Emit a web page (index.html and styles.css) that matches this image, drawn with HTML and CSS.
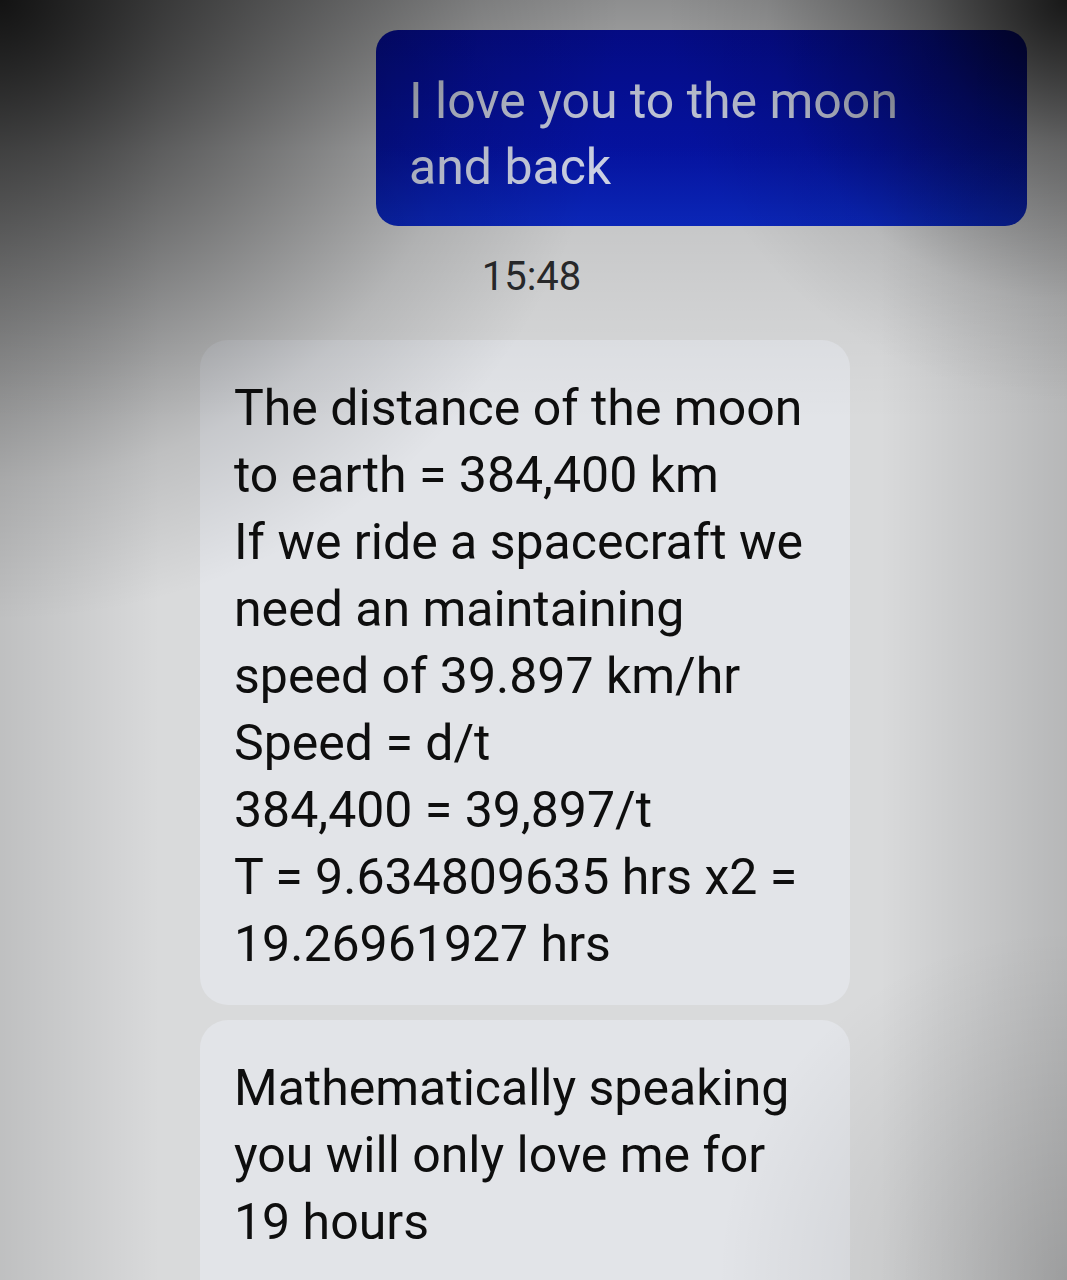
FILE: index.html
```html
<!DOCTYPE html>
<html lang="en">
<head>
<meta charset="utf-8">
<title>Messages</title>
<link rel="stylesheet" href="styles.css">
</head>
<body>
<main class="thread">
  <div class="msg sent">
    <p class="line">I love you to the moon</p>
    <p class="line">and back</p>
  </div>
  <div class="time">15:48</div>
  <div class="msg received first">
    <p class="line">The distance of the moon</p>
    <p class="line">to earth = 384,400 km</p>
    <p class="line">If we ride a spacecraft we</p>
    <p class="line">need an maintaining</p>
    <p class="line">speed of 39.897 km/hr</p>
    <p class="line">Speed = d/t</p>
    <p class="line">384,400 = 39,897/t</p>
    <p class="line">T = 9.634809635 hrs x2 =</p>
    <p class="line">19.26961927 hrs</p>
  </div>
  <div class="msg received second">
    <p class="line">Mathematically speaking</p>
    <p class="line">you will only love me for</p>
    <p class="line">19 hours</p>
  </div>
</main>
<div class="vignette"></div>
</body>
</html>
```
FILE: styles.css
```css
html, body {
  margin: 0;
  padding: 0;
}
body {
  width: 1067px;
  height: 1280px;
  overflow: hidden;
  position: relative;
  background: #d9dadb;
  font-family: Roboto, "Liberation Sans", Arial, sans-serif;
}
.thread {
  display: flex;
  flex-direction: column;
  padding-top: 30px;
}
.line {
  margin: 0;
  white-space: nowrap;
}
.msg.sent {
  align-self: flex-start;
  margin-left: 376px;
  width: 651px;
  box-sizing: border-box;
  padding: 38px 34px 26px 33px;
  border-radius: 22px;
  background: linear-gradient(180deg, #0610bc 0%, #0615b4 60%, #0c2ac8 100%);
  color: #e4eaff;
  font-size: 50px;
  line-height: 66px;
  font-weight: 400;
}
.time {
  text-align: center;
  margin-top: 28px;
  font-size: 40px;
  line-height: 46px;
  color: #2a2b2d;
  padding-right: 4px;
}
.msg.received {
  margin-left: 200px;
  width: 650px;
  box-sizing: border-box;
  padding: 35px 30px 27px 34px;
  border-radius: 28px;
  background: #e2e4e8;
  color: #0e0e0e;
  font-size: 50px;
  line-height: 67px;
}
.msg.received.first {
  margin-top: 40px;
}
.msg.received.second {
  margin-top: 15px;
  padding-top: 35px;
  padding-bottom: 60px;
}
.vignette {
  position: absolute;
  inset: 0;
  pointer-events: none;
  background:
    radial-gradient(circle at 0 0, rgba(0,0,0,0.85) 0, rgba(0,0,0,0.45) 260px, rgba(0,0,0,0.12) 480px, rgba(0,0,0,0) 620px),
    radial-gradient(circle at 100% 0, rgba(0,0,0,0.8) 0, rgba(0,0,0,0.4) 140px, rgba(0,0,0,0.08) 300px, rgba(0,0,0,0) 400px),
    linear-gradient(180deg, rgba(0,0,0,0.35) 0, rgba(0,0,0,0.12) 150px, rgba(0,0,0,0.04) 320px, rgba(0,0,0,0) 420px),
    linear-gradient(90deg, rgba(0,0,0,0.12) 0, rgba(0,0,0,0) 160px, rgba(0,0,0,0) 880px, rgba(0,0,0,0.16) 100%),
    radial-gradient(circle at 100% 100%, rgba(0,0,0,0.14) 0, rgba(0,0,0,0) 350px);
}
```
